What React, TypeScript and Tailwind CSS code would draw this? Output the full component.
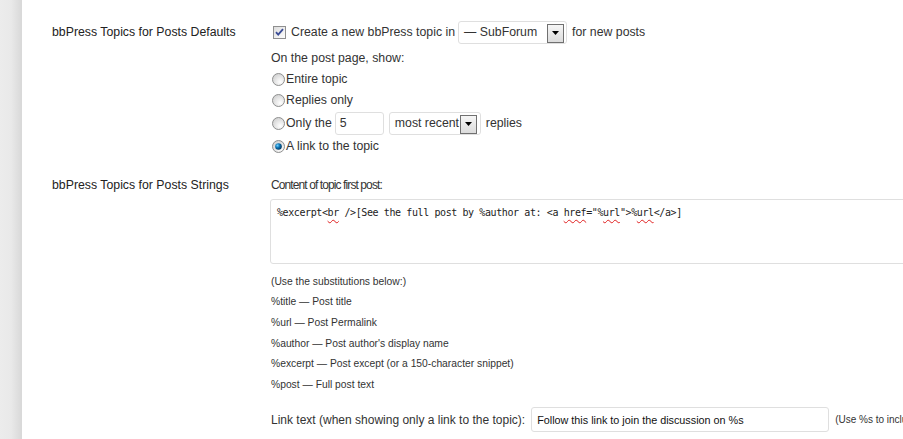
import React from 'react'

const SANS = 'font-["Liberation_Sans",Arial,sans-serif]'

function Checkbox() {
  return (
    <svg width="13" height="13" viewBox="0 0 13 13" className="shrink-0">
      <defs>
        <linearGradient id="cbg" x1="0" y1="0" x2="1" y2="1">
          <stop offset="0" stopColor="#dcdcdc" />
          <stop offset="1" stopColor="#ffffff" />
        </linearGradient>
      </defs>
      <rect x="0.5" y="0.5" width="12" height="12" fill="url(#cbg)" stroke="#8f8f8f" />
      <path d="M3 6.2 L5.2 8.6 L10 3.2" fill="none" stroke="#3a4c96" strokeWidth="1.8" />
    </svg>
  )
}

function Radio({ checked = false }: { checked?: boolean }) {
  return (
    <svg width="13" height="13" viewBox="0 0 13 13" className="shrink-0">
      <defs>
        <radialGradient id="rg" cx="0.65" cy="0.7" r="0.7">
          <stop offset="0" stopColor="#ffffff" />
          <stop offset="1" stopColor="#d4d4d4" />
        </radialGradient>
        <radialGradient id="rdot" cx="0.35" cy="0.35" r="0.7">
          <stop offset="0" stopColor="#6ad0ff" />
          <stop offset="0.5" stopColor="#0a6fb0" />
          <stop offset="1" stopColor="#06365a" />
        </radialGradient>
      </defs>
      <circle cx="6.5" cy="6.5" r="6" fill="url(#rg)" stroke="#8e8f8f" />
      {checked && <circle cx="6.5" cy="6.5" r="3.3" fill="url(#rdot)" />}
    </svg>
  )
}

function SelectBox({ label, width, btnRight }: { label: string; width: string; btnRight: string }) {
  return (
    <div className={`relative h-[23px] ${width} shrink-0 border border-[#dfdfdf] rounded-[3px] bg-white flex items-center pl-[5px]`}>
      <span className="whitespace-nowrap">{label}</span>
      <div
        className={`absolute top-[2px] ${btnRight} w-[17px] h-[19px] border border-[#707070] bg-gradient-to-b from-[#f6f6f6] to-[#dcdcdc] flex items-center justify-center`}
      >
        <svg width="7" height="4" viewBox="0 0 7 4">
          <path d="M0 0 H7 L3.5 4 Z" fill="#000" />
        </svg>
      </div>
    </div>
  )
}

function Sq({ children }: { children: React.ReactNode }) {
  return (
    <span className="underline decoration-wavy decoration-[#e02020] decoration-1 underline-offset-[3px]">
      {children}
    </span>
  )
}

const SUBS = [
  '(Use the substitutions below:)',
  '%title — Post title',
  '%url — Post Permalink',
  "%author — Post author's display name",
  '%excerpt — Post except (or a 150-character snippet)',
  '%post — Full post text',
]

export default function App() {
  return (
    <div className={`flex w-[903px] h-[439px] overflow-hidden bg-white text-[#333] text-[12.3px] ${SANS}`}>
      {/* admin menu edge */}
      <div className="w-[22px] shrink-0 bg-gradient-to-r from-[#ececec] via-[#e9e9e9] to-[#d8d8d8]" />

      <div className="flex-1 min-w-0 pl-[30px] pt-[20px]">
        {/* Defaults */}
        <div className="grid grid-cols-[219px_1fr]">
          <div className="h-[24px] flex items-center text-[#222]">bbPress Topics for Posts Defaults</div>
          <div className="flex flex-col">
            <div className="h-[24px] flex items-center whitespace-nowrap">
              <span className="ml-[2px]"><Checkbox /></span>
              <span className="ml-[5px] mr-[3px]">Create a new bbPress topic in</span>
              <SelectBox label="— SubForum" width="w-[109px]" btnRight="right-[2px]" />
              <span className="ml-[5px]">for new posts</span>
            </div>
            <div className="mt-[4px] h-[20px] flex items-center">On the post page, show:</div>
            <div className="mt-[1px] h-[20px] flex items-center gap-[1px]">
              <span className="ml-[1px]"><Radio /></span>Entire topic
            </div>
            <div className="mt-[1px] h-[20px] flex items-center gap-[1px]">
              <span className="ml-[1px]"><Radio /></span>Replies only
            </div>
            <div className="mt-[1px] h-[24px] flex items-center whitespace-nowrap">
              <span className="ml-[1px] mr-[1px]"><Radio /></span>
              <span>Only the</span>
              <div className="ml-[3px] w-[49px] h-[23px] shrink-0 border border-[#dfdfdf] rounded-[3px] flex items-center pl-[4px]">5</div>
              <div className="ml-[5px]">
                <SelectBox label="most recent" width="w-[92px]" btnRight="right-[3px]" />
              </div>
              <span className="ml-[5px]">replies</span>
            </div>
            <div className="mt-[1px] h-[20px] flex items-center gap-[1px]">
              <span className="ml-[1px]"><Radio checked /></span>A link to the topic
            </div>
          </div>
        </div>

        {/* Strings */}
        <div className="grid grid-cols-[219px_1fr] mt-[21px]">
          <div className="h-[16px] flex items-center text-[#222]">bbPress Topics for Posts Strings</div>
          <div className="flex flex-col min-w-0">
            <div className="h-[16px] flex items-center text-[12px] tracking-[-0.9px]">Content of topic first post:</div>
            <div className="mt-[6px] -ml-[1px] w-[700px] h-[65px] border border-[#dfdfdf] rounded-[3px] px-[6px] pt-[6px] font-['DejaVu_Sans_Mono',monospace] text-[10px] tracking-[-0.4px] leading-[14px] text-[#222] whitespace-pre">
              %excerpt&lt;<Sq>br</Sq> /&gt;[See the full post by %author at: &lt;a <Sq>href</Sq>="%<Sq>url</Sq>"&gt;%<Sq>url</Sq>&lt;/a&gt;]
            </div>
            <div className="mt-[7px] flex flex-col text-[10.3px]">
              {SUBS.map(s => (
                <div key={s} className="h-[20.7px] flex items-center">{s}</div>
              ))}
            </div>
            <div className="mt-[12px] h-[25px] flex items-center whitespace-nowrap">
              <span className="shrink-0 text-[12px]">Link text (when showing only a link to the topic):</span>
              <div className="ml-[6px] w-[298px] h-[25px] shrink-0 border border-[#dfdfdf] rounded-[3px] flex items-center pl-[5px] text-[10.8px] text-[#111]">
                Follow this link to join the discussion on %s
              </div>
              <span className="ml-[6px] shrink-0 text-[10px]">(Use %s to include the topic title)</span>
            </div>
          </div>
        </div>
      </div>
    </div>
  )
}
